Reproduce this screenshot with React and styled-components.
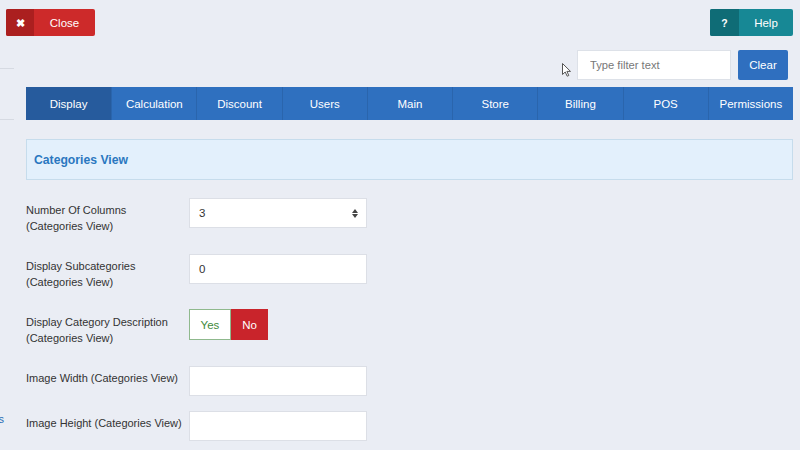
import React from "react";
import styled, { createGlobalStyle } from "styled-components";

const Global = createGlobalStyle`
  html, body { margin: 0; padding: 0; }
  body {
    background: #eaedf4;
    font-family: "Liberation Sans", Arial, sans-serif;
    color: #333;
    width: 800px;
    height: 450px;
    overflow: hidden;
  }
  * { box-sizing: border-box; }
`;

const Page = styled.div`
  position: relative;
  width: 800px;
  height: 450px;
  overflow: hidden;
`;

const Header = styled.div`
  display: flex;
  justify-content: space-between;
  padding: 9px 7px 0 6px;
`;

const ActionButton = styled.button`
  display: flex;
  align-items: stretch;
  height: 27px;
  width: ${(p) => p.$w}px;
  padding: 0;
  border: none;
  border-radius: 2px;
  overflow: hidden;
  background: ${(p) => p.$bg};
  color: #fff;
  font-family: inherit;
  font-size: 11.5px;
  cursor: pointer;
`;

const ButtonIcon = styled.span`
  width: ${(p) => p.$w}px;
  background: ${(p) => p.$bg};
  display: flex;
  align-items: center;
  justify-content: center;
  font-weight: bold;
  font-size: 10.5px;
`;

const ButtonLabel = styled.span`
  flex: 1;
  display: flex;
  align-items: center;
  justify-content: center;
`;

const Body = styled.div`
  display: flex;
`;

const Sidebar = styled.div`
  width: 14px;
  overflow: hidden;
  direction: rtl;
  padding-top: 32px;
`;

const SideLine = styled.div`
  height: 1px;
  background: #d6dae2;
  margin-bottom: ${(p) => p.$mb}px;
`;

const SideLink = styled.div`
  white-space: nowrap;
  color: #2a6db5;
  font-size: 11px;
  margin-right: 10px;
  margin-top: ${(p) => p.$mt}px;
`;

const Main = styled.div`
  flex: 1;
  margin-left: 12px;
  margin-right: 7px;
`;

const FilterRow = styled.div`
  display: flex;
  justify-content: flex-end;
  gap: 7px;
  margin-top: 14px;
  padding-right: 5px;
  height: 30px;
`;

const FilterInput = styled.input`
  width: 154px;
  height: 30px;
  border: 1px solid #dde1e8;
  background: #fff;
  padding: 0 12px;
  font-family: inherit;
  font-size: 11.2px;
  color: #333;
  outline: none;
  &::placeholder { color: #777; }
`;

const ClearButton = styled.button`
  width: 50px;
  height: 30px;
  border: none;
  background: #2f6fbf;
  color: #fff;
  font-family: inherit;
  font-size: 11.5px;
  border-radius: 2px;
`;

const Tabs = styled.div`
  display: grid;
  grid-template-columns: repeat(9, 1fr);
  margin-top: 7px;
  height: 33px;
  background: #2f70bf;
`;

const Tab = styled.div`
  display: flex;
  align-items: center;
  justify-content: center;
  color: #fff;
  font-size: 11.5px;
  background: ${(p) => (p.$active ? "#265b9d" : "transparent")};
  border-left: ${(p) => (p.$first ? "none" : "1px solid #2a65ad")};
`;

const Panel = styled.div`
  margin-top: 19px;
  height: 41px;
  background: #e3f0fc;
  border: 1px solid #c6dcec;
  display: flex;
  align-items: center;
  padding-left: 7px;
  color: #2a77c0;
  font-weight: bold;
  font-size: 12.2px;
`;

const Form = styled.div`
  margin-top: 18px;
  display: flex;
  flex-direction: column;
`;

const Row = styled.div`
  display: flex;
  align-items: flex-start;
  height: 30px;
  margin-bottom: ${(p) => p.$after}px;
`;

const Label = styled.div`
  width: 163px;
  padding-top: 4px;
  font-size: 11px;
  line-height: 16px;
  white-space: nowrap;
  color: #333;
`;

const Field = styled.div`
  position: relative;
  width: 178px;
  height: 30px;
  background: #fff;
  border: 1px solid #dcdfe6;
  display: flex;
  align-items: center;
  padding-left: 9px;
  font-size: 11.5px;
  color: #333;
`;

const SelectArrows = styled.span`
  position: absolute;
  right: 8px;
  top: 10px;
  display: flex;
  flex-direction: column;
  gap: 1px;
`;

const Toggle = styled.div`
  display: flex;
  height: 31px;
  margin-top: -1px;
`;

const ToggleOption = styled.div`
  width: ${(p) => p.$w}px;
  display: flex;
  align-items: center;
  justify-content: center;
  font-size: 11.5px;
  background: ${(p) => (p.$on ? "#c9242b" : "#fff")};
  color: ${(p) => (p.$on ? "#fff" : "#3f8a3c")};
  border: 1px solid ${(p) => (p.$on ? "#c9242b" : "#8fb98d")};
`;

const Cursor = styled.svg`
  position: absolute;
  left: 562px;
  top: 63px;
`;

const tabs = ["Display", "Calculation", "Discount", "Users", "Main", "Store", "Billing", "POS", "Permissions"];

export default function App() {
  return (
    <Page>
      <Global />
      <Header>
        <ActionButton $w={89} $bg="#cd2a2a">
          <ButtonIcon $w={28} $bg="#ab1f1f">✖</ButtonIcon>
          <ButtonLabel>Close</ButtonLabel>
        </ActionButton>
        <ActionButton $w={83} $bg="#178895">
          <ButtonIcon $w={29} $bg="#0f6c76">?</ButtonIcon>
          <ButtonLabel>Help</ButtonLabel>
        </ActionButton>
      </Header>
      <Body>
        <Sidebar>
          <SideLine $mb={50} />
          <SideLine $mb={0} />
          <SideLink $mt={293}>Options</SideLink>
        </Sidebar>
        <Main>
          <FilterRow>
            <FilterInput placeholder="Type filter text" />
            <ClearButton>Clear</ClearButton>
          </FilterRow>
          <Tabs>
            {tabs.map((t, i) => (
              <Tab key={t} $active={i === 0} $first={i === 0}>{t}</Tab>
            ))}
          </Tabs>
          <Panel>Categories View</Panel>
          <Form>
            <Row $after={26}>
              <Label>Number Of Columns<br />(Categories View)</Label>
              <Field>
                3
                <SelectArrows>
                  <svg width="6" height="4" viewBox="0 0 6 4"><path d="M3 0L6 4H0z" fill="#444" /></svg>
                  <svg width="6" height="4" viewBox="0 0 6 4"><path d="M0 0H6L3 4z" fill="#444" /></svg>
                </SelectArrows>
              </Field>
            </Row>
            <Row $after={26}>
              <Label>Display Subcategories<br />(Categories View)</Label>
              <Field>0</Field>
            </Row>
            <Row $after={26}>
              <Label>Display Category Description<br />(Categories View)</Label>
              <Toggle>
                <ToggleOption $w={42}>Yes</ToggleOption>
                <ToggleOption $w={37} $on>No</ToggleOption>
              </Toggle>
            </Row>
            <Row $after={15}>
              <Label>Image Width (Categories View)</Label>
              <Field />
            </Row>
            <Row $after={0}>
              <Label>Image Height (Categories View)</Label>
              <Field />
            </Row>
          </Form>
        </Main>
      </Body>
      <Cursor width="10" height="14" viewBox="0 0 10 14">
        <path d="M0.5 0.5V11.5L3.2 9L5.2 13.2L6.8 12.5L4.9 8.4H8.5Z" fill="#fff" stroke="#555" strokeWidth="1" />
      </Cursor>
    </Page>
  );
}
